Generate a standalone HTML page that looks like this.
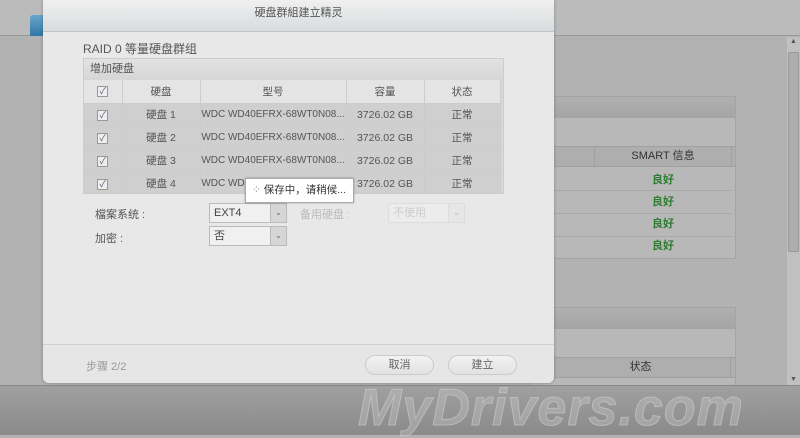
<!DOCTYPE html>
<html><head><meta charset="utf-8"><style>
*{margin:0;padding:0;box-sizing:border-box}
body{width:800px;height:435px;overflow:hidden;position:relative;background:#b2b2b2;font-family:"Liberation Sans","Noto Sans CJK SC",sans-serif;font-size:11px;color:#444}
.a{position:absolute}
.topbar{left:0;top:0;width:800px;height:36px;background:#bbbbbb;border-bottom:1px solid #999}
.bottom{left:0;top:385px;width:800px;height:50px;background:linear-gradient(#a0a0a0,#8a8a8a);border-top:1px solid #888}
.scroll{left:787px;top:37px;width:13px;height:348px;background:#c0c0c0}
.thumb{left:788px;top:52px;width:11px;height:200px;background:#adadad;border:1px solid #999;border-radius:2px}
.box{background:#b8b8b8;border:1px solid #a4a4a4}
.hdr{background:linear-gradient(#b0b0b0,#a4a4a4)}
.dlg{left:43px;top:0;width:511px;height:383px;background:#e8e8e8;border-radius:0 0 6px 6px;box-shadow:0 0 3px rgba(0,0,0,.3)}
.title{left:0;top:0;width:511px;height:32px;background:linear-gradient(#f0f0f0,#d8dcde);border-bottom:1px solid #c4c4c4;text-align:center;line-height:26px;color:#555;font-size:11px}
table{border-collapse:collapse;font-size:10.5px;color:#555;table-layout:fixed}
td{height:23px;text-align:center;border-bottom:1px solid #ccc;border-right:1px solid #ccc;white-space:nowrap;overflow:hidden}
.m{font-size:10px}
.cb{display:inline-block;width:11px;height:11px;border:1px solid #999;background:#eee;font-size:9px;line-height:9px;color:#557}
.sel{height:20px;background:#f0f0f0;border:1px solid #bbb;font-size:11px;line-height:18px;padding-left:4px;color:#444}
.sel i{position:absolute;right:0;top:0;width:16px;height:18px;background:#d6d6d6;border-left:1px solid #bbb;font-style:normal;text-align:center;font-size:8px;color:#666}
.btn{height:20px;border:1px solid #ccc;border-radius:10px;background:linear-gradient(#f2f2f2,#e2e2e2);text-align:center;line-height:18px;color:#666}
.good{color:#2e7d32;font-weight:bold}
</style></head><body>
<div class="a topbar"></div>
<div class="a" style="left:30px;top:15px;width:16px;height:21px;background:linear-gradient(#6aa6cc,#2e78a8);border-radius:3px 3px 0 0"></div>
<div class="a scroll"></div><div class="a thumb"></div>
<div class="a" style="left:790px;top:38px;font-size:7px;color:#555">▲</div>
<div class="a" style="left:790px;top:376px;font-size:7px;color:#555">▼</div>
<div class="a box" style="left:530px;top:96px;width:206px;height:163px">
 <div class="hdr" style="height:21px"></div>
 <div class="a" style="left:0;top:49px;width:204px;height:21px;background:#aeaeae;border-top:1px solid #a0a0a0;border-bottom:1px solid #a0a0a0"></div>
 <div class="a" style="left:63px;top:49px;width:138px;height:21px;border-left:1px solid #a0a0a0;border-right:1px solid #a0a0a0;text-align:center;line-height:20px;color:#333">SMART 信息</div>
 <div class="a good" style="left:63px;top:72px;width:138px;text-align:center;line-height:22px">良好<br>良好<br>良好<br>良好</div>
 <div class="a" style="left:0;top:93px;width:201px;border-top:1px solid #a8a8a8"></div>
 <div class="a" style="left:0;top:116px;width:201px;border-top:1px solid #a8a8a8"></div>
 <div class="a" style="left:0;top:139px;width:201px;border-top:1px solid #a8a8a8"></div>
</div>
<div class="a box" style="left:530px;top:307px;width:206px;height:80px">
 <div class="hdr" style="height:21px"></div>
 <div class="a" style="left:0;top:49px;width:204px;height:21px;background:#aeaeae;border-top:1px solid #a0a0a0;border-bottom:1px solid #a0a0a0"></div>
 <div class="a" style="left:0;top:49px;width:200px;height:21px;border-right:1px solid #a0a0a0;text-align:center;line-height:20px;color:#333;padding-left:20px">状态</div>
</div>
<div class="a bottom"></div>
<div class="a" style="left:358px;top:378px;font:italic bold 52px 'Liberation Sans',sans-serif;color:rgba(190,190,190,.45);-webkit-text-stroke:1px rgba(210,210,210,.55);letter-spacing:1px">MyDrivers.com</div>
<div class="a dlg">
 <div class="a title">硬盘群組建立精灵</div>
 <div class="a" style="left:40px;top:40px;font-size:12px;color:#555">RAID 0 等量硬盘群组</div>
 <div class="a" style="left:40px;top:58px;width:421px;height:136px;border:1px solid #ccc;background:#d8d8d8;overflow:hidden">
  <div style="height:21px;background:linear-gradient(#e2e2e2,#d6d6d6);line-height:20px;padding-left:6px;color:#555">增加硬盘</div>
  <table style="width:416px">
   <colgroup><col style="width:38px"><col style="width:78px"><col style="width:146px"><col style="width:78px"><col style="width:76px"></colgroup>
   <tr style="background:#e4e4e4"><td style="height:20px"><span class="cb">✓</span></td><td>硬盘</td><td>型号</td><td>容量</td><td>状态</td></tr>
   <tr style="background:#cfcfcf"><td><span class="cb">✓</span></td><td>硬盘 1</td><td class="m">WDC WD40EFRX-68WT0N08...</td><td>3726.02 GB</td><td>正常</td></tr>
   <tr style="background:#cfcfcf"><td><span class="cb">✓</span></td><td>硬盘 2</td><td class="m">WDC WD40EFRX-68WT0N08...</td><td>3726.02 GB</td><td>正常</td></tr>
   <tr style="background:#cfcfcf"><td><span class="cb">✓</span></td><td>硬盘 3</td><td class="m">WDC WD40EFRX-68WT0N08...</td><td>3726.02 GB</td><td>正常</td></tr>
   <tr style="background:#cfcfcf"><td><span class="cb">✓</span></td><td>硬盘 4</td><td class="m">WDC WD40EFRX-68WT0N08...</td><td>3726.02 GB</td><td>正常</td></tr>
  </table>
 </div>
 <div class="a" style="left:52px;top:206px;color:#555">檔案系统 :</div>
 <div class="a sel" style="left:166px;top:203px;width:78px">EXT4<i>⌄</i></div>
 <div class="a" style="left:257px;top:206px;color:#bbb">备用硬盘 :</div>
 <div class="a sel" style="left:345px;top:203px;width:77px;color:#ccc;background:#ececec;border-color:#ddd">不使用<i style="background:#e6e6e6;border-color:#ddd;color:#bbb">⌄</i></div>
 <div class="a" style="left:52px;top:230px;color:#555">加密 :</div>
 <div class="a sel" style="left:166px;top:226px;width:78px">否<i>⌄</i></div>
 <div class="a" style="left:202px;top:178px;width:109px;height:25px;background:#fff;border:1px solid #aaa;box-shadow:0 0 2px rgba(0,0,0,.3);line-height:23px;padding-left:6px;color:#333;white-space:nowrap;font-size:10.5px">
  <span style="color:#888">⁘</span> 保存中，请稍候...</div>
 <div class="a" style="left:0;top:344px;width:511px;height:39px;border-top:1px solid #d0d0d0;background:#e6e6e6;border-radius:0 0 6px 6px"></div>
 <div class="a" style="left:43px;top:358px;color:#999">步骤 2/2</div>
 <div class="a btn" style="left:322px;top:355px;width:69px">取消</div>
 <div class="a btn" style="left:405px;top:355px;width:69px">建立</div>
</div>
</body></html>
